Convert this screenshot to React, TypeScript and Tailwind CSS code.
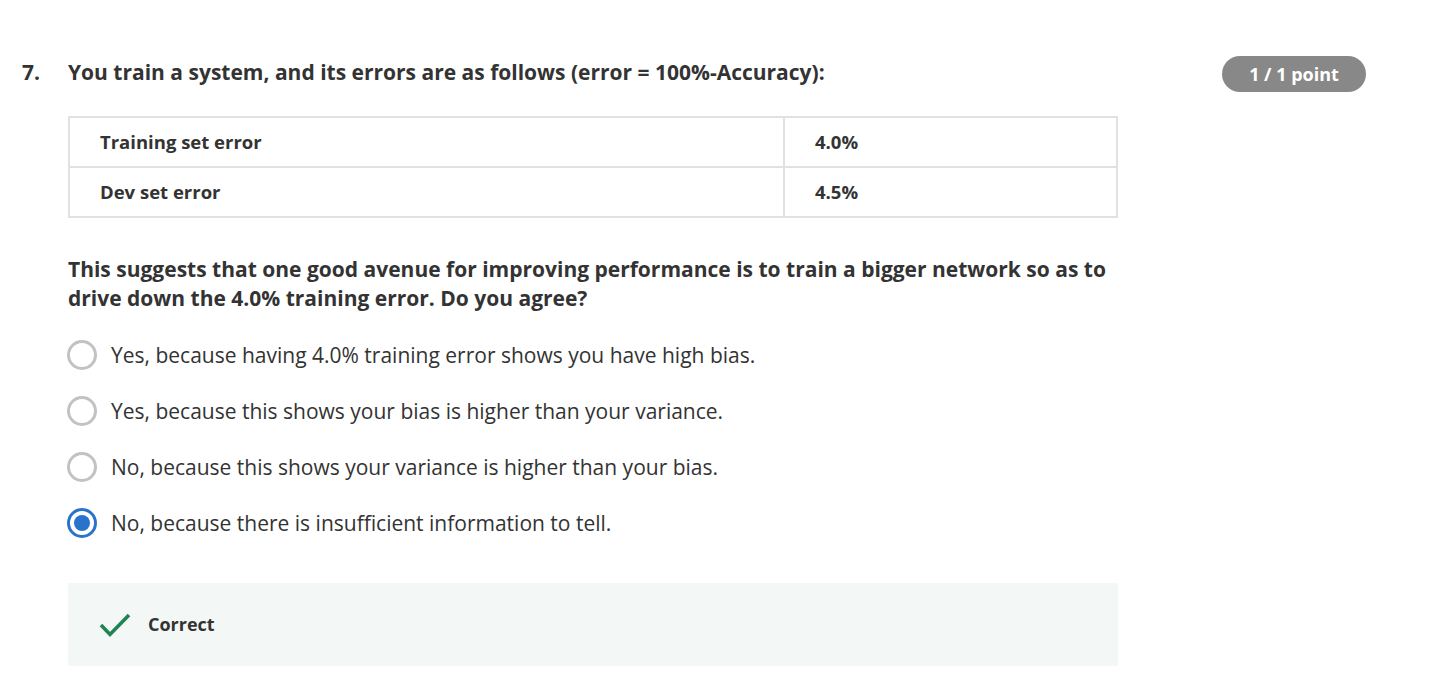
import React from "react";

const options = [
  "Yes, because having 4.0% training error shows you have high bias.",
  "Yes, because this shows your bias is higher than your variance.",
  "No, because this shows your variance is higher than your bias.",
  "No, because there is insufficient information to tell.",
];

const Radio = ({ checked }: { checked: boolean }) =>
  checked ? (
    <span className="-ml-px flex h-[30px] w-[30px] shrink-0 items-center justify-center rounded-full border-[3px] border-[#2a73cc] bg-white">
      <span className="h-[16px] w-[16px] rounded-full bg-[#2a73cc]" />
    </span>
  ) : (
    <span className="-ml-px h-[30px] w-[30px] shrink-0 rounded-full border-[3px] border-[#c2c2c2] bg-white" />
  );

export default function App() {
  return (
    <div className="min-h-[696px] w-full bg-white font-['Open_Sans',sans-serif] text-[#333333]">
      <div className="flex pt-[57px]">
        <div className="w-[68px] shrink-0 pl-[22px] text-[21px] font-bold leading-[30px]">7.</div>
        <div className="w-[1050px] shrink-0">
          <h2 className="text-[21px] font-bold leading-[30px]">
            You train a system, and its errors are as follows (error = 100%-Accuracy):
          </h2>
          <table className="mt-[29px] w-[1050px] border-collapse text-[18.5px] font-bold">
            <tbody>
              <tr className="h-[50px]">
                <td className="w-[715px] border-2 border-[#e1e1e1] pl-[30px]">Training set error</td>
                <td className="border-2 border-[#e1e1e1] pl-[30px]">4.0%</td>
              </tr>
              <tr className="h-[50px]">
                <td className="border-2 border-[#e1e1e1] pl-[30px]">Dev set error</td>
                <td className="border-2 border-[#e1e1e1] pl-[30px]">4.5%</td>
              </tr>
            </tbody>
          </table>
          <p className="mt-[37px] text-[21px] font-bold leading-[29px]">
            This suggests that one good avenue for improving performance is to train a bigger network so as to drive
            down the 4.0% training error. Do you agree?
          </p>
          <div className="mt-[27px] flex flex-col gap-[26px]">
            {options.map((o, i) => (
              <label key={i} className="flex items-center gap-[14px]">
                <Radio checked={i === 3} />
                <span className="text-[21px] leading-[30px]">{o}</span>
              </label>
            ))}
          </div>
          <div className="mt-[45px] flex h-[83px] items-center bg-[#f3f8f6] pl-[31px]">
            <svg width="32" height="26" viewBox="0 0 32 26" fill="none">
              <path d="M2 13 L11 22.5 L30 3" stroke="#1f8354" strokeWidth="3.6" />
            </svg>
            <span className="ml-[17px] text-[18px] font-bold">Correct</span>
          </div>
        </div>
        <div className="ml-[104px] -mt-px">
          <span className="flex h-[36px] w-[144px] items-center justify-center rounded-full bg-[#888888] text-[18px] font-bold text-white">
            1 / 1 point
          </span>
        </div>
      </div>
    </div>
  );
}
